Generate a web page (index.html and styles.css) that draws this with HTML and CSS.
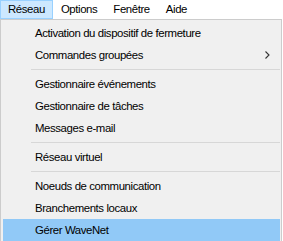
FILE: index.html
```html
<!DOCTYPE html>
<html lang="fr">
<head>
  <meta charset="UTF-8">
  <title>Menu Réseau</title>
  <link rel="stylesheet" href="styles.css">
</head>
<body>
  <!-- barre de menus -->
  <div class="menubar">
    <span class="top-item open">Réseau</span>
    <span class="top-item">Options</span>
    <span class="top-item">Fenêtre</span>
    <span class="top-item">Aide</span>
  </div>

  <!-- menu déroulant -->
  <div class="dropdown">
    <div class="item">Activation du dispositif de fermeture</div>
    <div class="item sub">Commandes groupées
      <svg class="arrow" width="5" height="8" viewBox="0 0 5 8"><path d="M0.5 0.5 L4 4 L0.5 7.5" fill="none" stroke="#333" stroke-width="1.1"/></svg>
    </div>
    <div class="sep"></div>
    <div class="item">Gestionnaire événements</div>
    <div class="item">Gestionnaire de tâches</div>
    <div class="item">Messages e-mail</div>
    <div class="sep"></div>
    <div class="item">Réseau virtuel</div>
    <div class="sep"></div>
    <div class="item">Noeuds de communication</div>
    <div class="item">Branchements locaux</div>
    <div class="item active">Gérer WaveNet</div>
  </div>
</body>
</html>
```

FILE: styles.css
```css
body { margin:0; background:#fff; font-family:"Liberation Sans", Arial, sans-serif; font-size:11.4px; letter-spacing:-0.4px; color:#000; width:283px; height:241px; overflow:hidden; }
.menubar { display:flex; height:19px; background:#fff; }
.top-item { box-sizing:border-box; height:19px; line-height:17px; padding:0 7px; border:1px solid transparent; }
.top-item.open { background:#cce8ff; border-color:#99d1ff; }
.dropdown { box-sizing:border-box; width:282px; background:#f0f0f0; border:1px solid #cccccc; padding:2px 1px 0 2px; }
.item { position:relative; height:22px; line-height:22px; padding-left:32px; }
.item.active { background:#91c9f7; }
.arrow { position:absolute; right:10px; top:7px; }
.sep { height:1px; background:#d7d7d7; margin:3px 0 3px 28px; }
```
